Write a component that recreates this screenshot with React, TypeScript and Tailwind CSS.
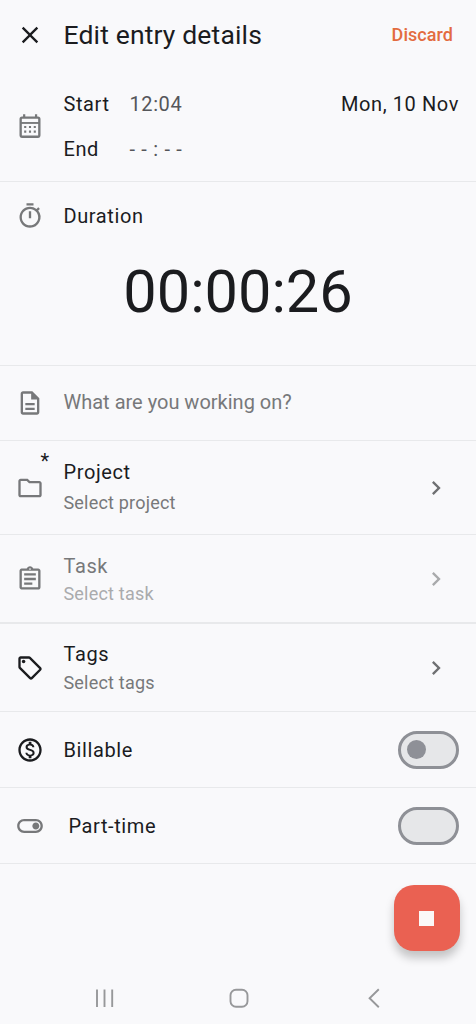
import React from 'react';
import {
    MdChevronRight,
    MdClose,
    MdOutlineAssignment,
    MdOutlineDescription,
    MdOutlineFolder,
    MdOutlineMonetizationOn,
    MdOutlineSell,
    MdOutlineTimer,
    MdOutlineToggleOn,
} from 'react-icons/md';

const PICKERS = [
    {
        icon: <MdOutlineFolder className="w-7 h-7 text-[#77787a]" />,
        title: 'Project',
        hint: 'Select project',
        required: true,
        row: 'h-[94px] border-b',
        gap: 'gap-[5px] pt-[2px]',
        titleColor: 'text-[#1b1c1f]',
        hintColor: 'text-[#77787a]',
        chevron: 'text-[#6f7072]',
    },
    {
        icon: <MdOutlineAssignment className="w-7 h-7 text-[#77787a]" />,
        title: 'Task',
        hint: 'Select task',
        required: false,
        row: 'h-[89px] border-b-2',
        gap: 'gap-[2px] pt-[5px]',
        titleColor: 'text-[#77787a]',
        hintColor: 'text-[#aaabad]',
        chevron: 'text-[#a9aaac]',
    },
    {
        icon: <MdOutlineSell className="w-7 h-7 text-[#1b1c1f]" />,
        title: 'Tags',
        hint: 'Select tags',
        required: false,
        row: 'h-[88px] border-b',
        gap: 'gap-[3px] pt-[4px]',
        titleColor: 'text-[#1b1c1f]',
        hintColor: 'text-[#77787a]',
        chevron: 'text-[#6f7072]',
    },
];

function CalendarIcon() {
    return (
        <svg className="w-7 h-7 text-[#77787a]" viewBox="0 0 24 24" fill="none" stroke="currentColor">
            <rect x="4" y="4.8" width="16" height="16.4" rx="1.2" strokeWidth="2" />
            <path d="M7 1.9v3M17.2 1.9v3" strokeWidth="1.9" />
            <path d="M4 9.4h16" strokeWidth="1.6" />
            <path d="M7 12.9h1.8M11.1 12.9h1.8M15.2 12.9h1.8M7 16.8h1.8M11.1 16.8h1.8M15.2 16.8h1.8" strokeWidth="1.8" />
        </svg>
    );
}

function Switch({ knob }: { knob?: boolean }) {
    return (
        <div className="w-[61px] h-[38px] rounded-full border-3 border-[#8e9096] bg-[#e6e7e9] flex items-center pl-[6px]">
            {knob && <div className="w-[19px] h-[19px] rounded-full bg-[#8e9097]" />}
        </div>
    );
}

function Header() {
    return (
        <header className="h-[70px] flex items-center pl-[16.4px] pr-[23px]">
            <MdClose className="w-7 h-7 text-[#1b1c1f]" />
            <h1 className="ml-[19.1px] flex-1 text-[26.5px] leading-8 tracking-[0.15px] text-[#1b1c1f]">Edit entry details</h1>
            <button className="text-[18px] font-medium tracking-[0.05px] text-[#e36b40]">Discard</button>
        </header>
    );
}

function NavigationBar() {
    return (
        <nav className="flex items-center h-[52px] text-[#97989a]">
            <svg className="w-7 h-7 ml-[90px]" viewBox="0 0 28 28" fill="none" stroke="currentColor" strokeWidth="1.9">
                <path d="M7 5.5v17.5M14.5 5.5v17.5M22.2 5.5v17.5" />
            </svg>
            <svg className="w-7 h-7 ml-[107px]" viewBox="0 0 28 28" fill="none" stroke="currentColor" strokeWidth="1.9">
                <rect x="5.5" y="5.7" width="17" height="17" rx="5.5" />
            </svg>
            <svg className="w-7 h-7 ml-[107px]" viewBox="0 0 28 28" fill="none" stroke="currentColor" strokeWidth="1.9">
                <path d="M18.8 5.2 9.6 14.2 18.8 23.2" />
            </svg>
        </nav>
    );
}

export default function App() {
    return (
        <div className="w-[476px] h-[1024px] flex flex-col overflow-hidden bg-[#f9f9fb] font-[Roboto,sans-serif] text-[20px] leading-6 tracking-[0.6px] text-[#1b1c1f]">
            <Header />

            <section className="h-[112px] flex items-center pl-[16.4px] pr-[17px] border-b border-[#e8e9eb]">
                <CalendarIcon />
                <div className="ml-[19.1px] pt-[2px] flex-1 flex flex-col gap-[21px]">
                    <div className="flex">
                        <span className="w-[66px]">Start</span>
                        <span className="flex-1 text-[#55565a]">12:04</span>
                        <span>Mon, 10 Nov</span>
                    </div>
                    <div className="flex">
                        <span className="w-[66px]">End</span>
                        <span className="tracking-[0.7px] text-[#55565a]">- - : - -</span>
                    </div>
                </div>
            </section>

            <section className="h-[184px] pt-[20px] border-b border-[#e8e9eb]">
                <div className="flex items-center pl-[16.4px]">
                    <MdOutlineTimer className="w-7 h-7 text-[#77787a]" />
                    <span className="ml-[19.1px]">Duration</span>
                </div>
                <div className="mt-[27px] text-center text-[59.5px] leading-[70px] tracking-normal">00:00:26</div>
            </section>

            <section className="h-[75px] flex items-center pl-[16.4px] border-b border-[#e8e9eb]">
                <MdOutlineDescription className="w-7 h-7 text-[#77787a]" />
                <span className="ml-[19.1px] pb-[2px] tracking-normal text-[#77787a]">What are you working on?</span>
            </section>

            {PICKERS.map((picker) => (
                <section key={picker.title} className={`flex items-center pl-[16.4px] pr-[26px] border-[#e8e9eb] ${picker.row}`}>
                    <div className="relative">
                        {picker.icon}
                        {picker.required && <span className="absolute left-[24px] top-[-25px]">*</span>}
                    </div>
                    <div className={`ml-[19.1px] flex-1 flex flex-col ${picker.gap}`}>
                        <span className={picker.titleColor}>{picker.title}</span>
                        <span className={`text-[18px] leading-7 tracking-[0.2px] ${picker.hintColor}`}>{picker.hint}</span>
                    </div>
                    <MdChevronRight className={`w-7 h-7 ${picker.chevron}`} />
                </section>
            ))}

            <section className="h-[76px] flex items-center pl-[16.4px] pr-[17px] border-b border-[#e8e9eb]">
                <MdOutlineMonetizationOn className="w-7 h-7" />
                <span className="ml-[19.1px] flex-1">Billable</span>
                <Switch knob />
            </section>

            <section className="h-[76px] flex items-center pl-[16.4px] pr-[17px] border-b border-[#e8e9eb]">
                <MdOutlineToggleOn className="w-7 h-7 text-[#77787a]" />
                <span className="ml-[24.1px] flex-1">Part-time</span>
                <Switch />
            </section>

            <div className="flex-1 flex justify-end pt-[21px] pr-[16.5px]">
                <button className="w-[66px] h-[66px] rounded-[20px] bg-[#ea6152] flex items-center justify-center shadow-[0_7px_10px_rgba(0,0,0,0.22)]">
                    <span className="w-[15px] h-[15px] bg-[#fbf8f8]" />
                </button>
            </div>

            <NavigationBar />
        </div>
    );
}
